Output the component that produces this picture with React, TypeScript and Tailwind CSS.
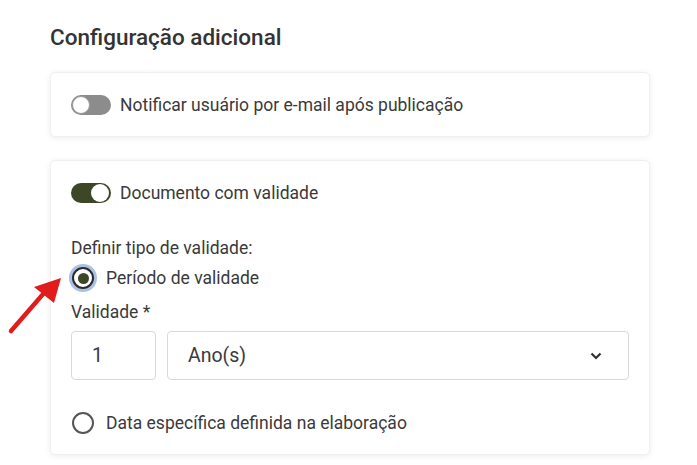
import React from 'react';

const Toggle = ({ on }: { on: boolean }) => (
  <div
    className={`relative h-[20px] w-[40px] shrink-0 rounded-full ${on ? 'bg-[#3d4728]' : 'bg-[#8c8c8c]'}`}
  >
    <div
      className={`absolute top-[1px] h-[18px] w-[18px] rounded-full bg-white ${
        on ? 'left-[20px]' : 'left-[1px] border border-[#9a9a9a]'
      }`}
    />
  </div>
);

const Radio = ({ checked }: { checked: boolean }) => (
  <div
    className={`flex h-[22px] w-[22px] shrink-0 items-center justify-center rounded-full border-2 ${
      checked ? 'border-[#2b2b2b] ring-[3px] ring-[#a9c1e6]' : 'border-[#555]'
    } bg-white`}
  >
    {checked && <div className="h-[11px] w-[11px] rounded-full bg-[#3d4728]" />}
  </div>
);

const App = () => {
  return (
    <div className="relative min-h-[465px] w-[697px] bg-white font-['Roboto',sans-serif] text-[#3a3a3a]">
      <div className="pl-[50px] pr-[47px] pt-[22px]">
        <h2 className="text-[22.5px] font-medium leading-[30px] text-[#333]">Configuração adicional</h2>

        {/* Card 1 */}
        <div className="mt-[20px] flex h-[65px] items-center gap-[9px] rounded-[5px] border border-[#f0f0f0] bg-white px-[20px] shadow-[0_1px_6px_rgba(0,0,0,0.08)]">
          <Toggle on={false} />
          <span className="text-[17.5px] leading-[20px]">Notificar usuário por e-mail após publicação</span>
        </div>

        {/* Card 2 */}
        <div className="mt-[23px] h-[295px] rounded-[5px] border border-[#f0f0f0] bg-white px-[20px] pt-[22px] shadow-[0_1px_6px_rgba(0,0,0,0.08)]">
          <div className="flex items-center gap-[9px]">
            <Toggle on />
            <span className="text-[17.5px] leading-[20px]">Documento com validade</span>
          </div>

          <div className="mt-[35px] text-[17.5px] leading-[20px]">Definir tipo de validade:</div>

          <div className="mt-[9px] flex items-center gap-[12px] pl-[1px]">
            <Radio checked />
            <span className="text-[17.5px] leading-[20px]">Período de validade</span>
          </div>

          <div className="mt-[13px] text-[17.5px] leading-[20px]">Validade *</div>

          <div className="mt-[9px] flex gap-[11px]">
            <div className="flex h-[49px] w-[85px] items-center rounded-[4px] border border-[#d9d9d9] px-[20px] text-[19.5px]">
              1
            </div>
            <div className="flex h-[49px] flex-1 items-center justify-between rounded-[4px] border border-[#d9d9d9] pl-[20px] pr-[26px] text-[19.5px]">
              <span>Ano(s)</span>
              <svg width="12" height="8" viewBox="0 0 12 8" fill="none">
                <path d="M1.5 1.5L6 6L10.5 1.5" stroke="#333" strokeWidth="2.2" />
              </svg>
            </div>
          </div>

          <div className="mt-[32px] flex items-center gap-[12px] pl-[1px]">
            <Radio checked={false} />
            <span className="text-[17.5px] leading-[20px]">Data específica definida na elaboração</span>
          </div>
        </div>
      </div>

      {/* Red arrow annotation */}
      <svg className="absolute left-0 top-[265px]" width="70" height="75" viewBox="0 0 70 75">
        <line x1="11" y1="66" x2="44" y2="28" stroke="#e21c1c" strokeWidth="4.5" strokeLinecap="round" />
        <polygon points="61,13 54,38 34,22" fill="#e21c1c" />
      </svg>
    </div>
  );
};

export default App;
